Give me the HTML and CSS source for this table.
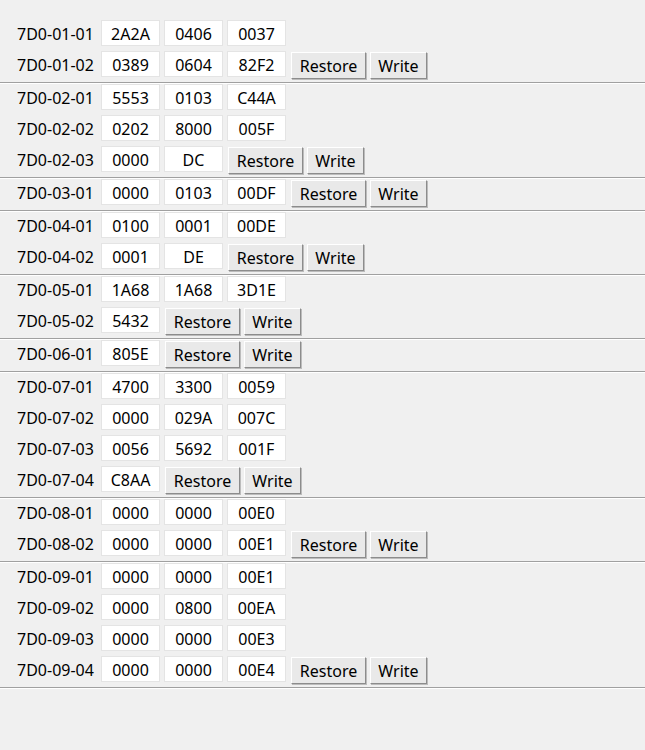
FILE: index.html
```html
<!DOCTYPE html>
<html>
<head>
<meta charset="utf-8">
<link rel="stylesheet" href="styles.css">
</head>
<body>
<div class="page">
  <div class="group">
    <div class="row"><span class="lbl">7D0-01-01</span><span class="val">2A2A</span><span class="val">0406</span><span class="val">0037</span></div>
    <div class="row"><span class="lbl">7D0-01-02</span><span class="val">0389</span><span class="val">0604</span><span class="val">82F2</span><button class="btn restore">Restore</button><button class="btn write">Write</button></div>
  </div>
  <div class="group">
    <div class="row"><span class="lbl">7D0-02-01</span><span class="val">5553</span><span class="val">0103</span><span class="val">C44A</span></div>
    <div class="row"><span class="lbl">7D0-02-02</span><span class="val">0202</span><span class="val">8000</span><span class="val">005F</span></div>
    <div class="row"><span class="lbl">7D0-02-03</span><span class="val">0000</span><span class="val">DC</span><button class="btn restore">Restore</button><button class="btn write">Write</button></div>
  </div>
  <div class="group">
    <div class="row"><span class="lbl">7D0-03-01</span><span class="val">0000</span><span class="val">0103</span><span class="val">00DF</span><button class="btn restore">Restore</button><button class="btn write">Write</button></div>
  </div>
  <div class="group">
    <div class="row"><span class="lbl">7D0-04-01</span><span class="val">0100</span><span class="val">0001</span><span class="val">00DE</span></div>
    <div class="row"><span class="lbl">7D0-04-02</span><span class="val">0001</span><span class="val">DE</span><button class="btn restore">Restore</button><button class="btn write">Write</button></div>
  </div>
  <div class="group">
    <div class="row"><span class="lbl">7D0-05-01</span><span class="val">1A68</span><span class="val">1A68</span><span class="val">3D1E</span></div>
    <div class="row"><span class="lbl">7D0-05-02</span><span class="val">5432</span><button class="btn restore">Restore</button><button class="btn write">Write</button></div>
  </div>
  <div class="group">
    <div class="row"><span class="lbl">7D0-06-01</span><span class="val">805E</span><button class="btn restore">Restore</button><button class="btn write">Write</button></div>
  </div>
  <div class="group">
    <div class="row"><span class="lbl">7D0-07-01</span><span class="val">4700</span><span class="val">3300</span><span class="val">0059</span></div>
    <div class="row"><span class="lbl">7D0-07-02</span><span class="val">0000</span><span class="val">029A</span><span class="val">007C</span></div>
    <div class="row"><span class="lbl">7D0-07-03</span><span class="val">0056</span><span class="val">5692</span><span class="val">001F</span></div>
    <div class="row"><span class="lbl">7D0-07-04</span><span class="val">C8AA</span><button class="btn restore">Restore</button><button class="btn write">Write</button></div>
  </div>
  <div class="group">
    <div class="row"><span class="lbl">7D0-08-01</span><span class="val">0000</span><span class="val">0000</span><span class="val">00E0</span></div>
    <div class="row"><span class="lbl">7D0-08-02</span><span class="val">0000</span><span class="val">0000</span><span class="val">00E1</span><button class="btn restore">Restore</button><button class="btn write">Write</button></div>
  </div>
  <div class="group">
    <div class="row"><span class="lbl">7D0-09-01</span><span class="val">0000</span><span class="val">0000</span><span class="val">00E1</span></div>
    <div class="row"><span class="lbl">7D0-09-02</span><span class="val">0000</span><span class="val">0800</span><span class="val">00EA</span></div>
    <div class="row"><span class="lbl">7D0-09-03</span><span class="val">0000</span><span class="val">0000</span><span class="val">00E3</span></div>
    <div class="row"><span class="lbl">7D0-09-04</span><span class="val">0000</span><span class="val">0000</span><span class="val">00E4</span><button class="btn restore">Restore</button><button class="btn write">Write</button></div>
  </div>
</div>
</body>
</html>
```

FILE: styles.css
```css
html, body {
  margin: 0;
  padding: 0;
  background: #f0f0f0;
}
body {
  font-family: "Noto Sans", "DejaVu Sans", sans-serif;
  font-size: 16px;
  color: #000;
}
.page {
  padding-top: 20px;
}
.group {
  border-bottom: 1px solid #a0a0a0;
  box-shadow: 0 1px 0 #ffffff;
  margin-bottom: 1px;
}
.row {
  display: flex;
  align-items: flex-start;
  height: 31px;
}
.lbl {
  box-sizing: border-box;
  width: 101px;
  padding-left: 17px;
  padding-top: 1px;
  height: 26px;
  line-height: 26px;
  white-space: nowrap;
}
.val {
  box-sizing: border-box;
  width: 59px;
  height: 26px;
  margin-right: 4px;
  padding-top: 1px;
  background: #ffffff;
  border: 1px solid #e4e4e4;
  text-align: center;
  line-height: 24px;
}
.btn {
  box-sizing: border-box;
  height: 27px;
  margin-top: 1px;
  margin-left: 1px;
  margin-right: 4px;
  padding: 1px 0 0;
  font: inherit;
  color: #000;
  background: #e9e9e9;
  border: 1px solid;
  border-color: #ffffff #8c8c8c #8c8c8c #ffffff;
  box-shadow: 1px 1px 0 #bcbcbc;
  text-align: center;
  line-height: 24px;
}
.restore {
  width: 75px;
}
.write {
  width: 57px;
  margin-left: 0;
}
```
